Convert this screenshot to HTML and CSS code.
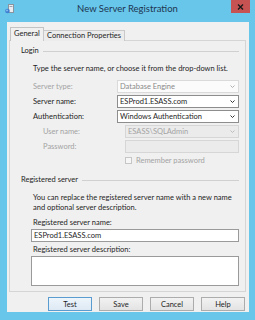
FILE: index.html
```html
<!DOCTYPE html>
<html lang="en">
<head>
    <meta charset="UTF-8">
    <title>New Server Registration</title>
    <link rel="stylesheet" href="styles.css">
</head>
<body>
    <div class="window">
        <div class="titlebar">
            <svg class="app-icon" width="9" height="10" viewBox="0 0 9 10">
                <rect x="3.5" y="0.5" width="5" height="8" fill="#e9edf1" stroke="#8a949e"/>
                <line x1="4.5" y1="2.5" x2="7.5" y2="2.5" stroke="#9aa4ae"/>
                <circle cx="2.5" cy="7" r="2.3" fill="#3d7fd0"/>
                <circle cx="2" cy="6.4" r="0.9" fill="#8fc3f2"/>
            </svg>
            <div class="title">New Server Registration</div>
            <div class="close">
                <svg width="7" height="6" viewBox="0 0 7 6">
                    <path d="M1 0.5 L6 5.5 M6 0.5 L1 5.5" stroke="#1a1a1a" stroke-width="1.4"/>
                </svg>
            </div>
        </div>

        <div class="client">
            <div class="tabs">
                <div class="tab active">General</div>
                <div class="tab">Connection Properties</div>
            </div>

            <div class="panel">
                <div class="legend"><span>Login</span></div>
                <p class="hint">Type the server name, or choose it from the drop-down list.</p>

                <div class="form">
                    <div class="label disabled">Server type:</div>
                    <div class="combo readonly">
                        <span>Database Engine</span>
                        <svg class="arrow" width="5" height="3" viewBox="0 0 5 3"><path d="M0.5 0.5 L2.5 2.5 L4.5 0.5" fill="none" stroke="#b0b0b0"/></svg>
                    </div>

                    <div class="label">Server name:</div>
                    <div class="combo">
                        <span>ESProd1.ESASS.com</span>
                        <svg class="arrow" width="5" height="3" viewBox="0 0 5 3"><path d="M0.5 0.5 L2.5 2.5 L4.5 0.5" fill="none" stroke="#333"/></svg>
                    </div>

                    <div class="label">Authentication:</div>
                    <div class="combo">
                        <span>Windows Authentication</span>
                        <svg class="arrow" width="5" height="3" viewBox="0 0 5 3"><path d="M0.5 0.5 L2.5 2.5 L4.5 0.5" fill="none" stroke="#333"/></svg>
                    </div>

                    <div class="label disabled sub">User name:</div>
                    <div class="combo off sub">
                        <span>ESASS\SQLAdmin</span>
                        <svg class="arrow" width="5" height="3" viewBox="0 0 5 3"><path d="M0.5 0.5 L2.5 2.5 L4.5 0.5" fill="none" stroke="#bdbdbd"/></svg>
                    </div>

                    <div class="label disabled sub">Password:</div>
                    <div class="combo off sub"></div>

                    <div></div>
                    <div class="check sub">
                        <span class="box"></span>
                        <span class="disabled">Remember password</span>
                    </div>
                </div>

                <div class="legend second"><span>Registered server</span></div>
                <p class="hint para">You can replace the registered server name with a new name<br>and optional server description.</p>

                <div class="reg">
                    <div class="reg-label">Registered server name:</div>
                    <div class="text-input">ESProd1.ESASS.com</div>
                    <div class="reg-label desc">Registered server description:</div>
                    <div class="text-area"></div>
                </div>
            </div>

            <div class="buttons">
                <button class="btn default">Test</button>
                <button class="btn">Save</button>
                <button class="btn">Cancel</button>
                <button class="btn">Help</button>
            </div>
        </div>
    </div>
</body>
</html>
```

FILE: styles.css
```css
:root {
    --frame: #68c6eb;
    --face: #f0f0f0;
    --line: #d5d5d5;
    --text: #1e1e1e;
    --text-off: #a3a3a3;
}

* {
    margin: 0;
    padding: 0;
    box-sizing: border-box;
}

body {
    font-family: Lato, 'Noto Sans', sans-serif;
    font-size: 7.5px;
    color: var(--text);
    background: var(--frame);
}

.window {
    width: 255px;
    height: 320px;
    background: var(--frame);
    display: flex;
    flex-direction: column;
}

/* title bar */
.titlebar {
    height: 22px;
    display: grid;
    grid-template-columns: 1fr auto 1fr;
    align-items: start;
}

.app-icon {
    margin: 4px 0 0 5px;
}

.title {
    font-size: 9.5px;
    line-height: 12px;
    margin-top: 3px;
    color: #1d3550;
}

.close {
    justify-self: end;
    width: 19px;
    height: 13px;
    margin-right: 5px;
    background: #c75252;
    display: flex;
    align-items: center;
    justify-content: center;
}

/* client area */
.client {
    height: 290px;
    margin: 0 6px 0 7px;
    background: var(--face);
    padding: 5px 0 0 0;
}

.tabs {
    display: flex;
    align-items: flex-end;
    margin-left: 3px;
    height: 14px;
    position: relative;
    z-index: 1;
}

.tab {
    height: 11px;
    line-height: 10px;
    padding: 0 3px;
    border: 1px solid #c9c9c9;
    border-bottom: none;
    background: #ececec;
    white-space: nowrap;
}

.tab.active {
    height: 14px;
    width: 34px;
    line-height: 12px;
    background: var(--face);
    border-color: #c3c3c3;
    margin-right: -1px;
}

.panel {
    margin: -1px 3px 0 2px;
    height: 252px;
    border: 1px solid var(--line);
    padding: 5px 6px 0 11px;
}

.legend {
    display: flex;
    align-items: center;
    height: 10px;
    line-height: 10px;
}

.legend::after {
    content: '';
    flex: 1;
    height: 1px;
    background: #d0d0d0;
    margin-left: 4px;
}

.legend.second {
    margin-top: 9px;
}

.hint {
    margin: 8px 0 0 12px;
    line-height: 10px;
    white-space: nowrap;
}

.hint.para {
    margin-top: 8px;
}

/* login form */
.form {
    display: grid;
    grid-template-columns: 84px 1fr;
    row-gap: 2px;
    margin: 6px 0 0 12px;
    align-items: center;
}

.label.sub {
    padding-left: 10px;
}

.disabled {
    color: var(--text-off);
}

.combo {
    height: 13px;
    border: 1px solid #8d8d8d;
    background: #fff;
    display: flex;
    align-items: center;
    justify-content: space-between;
    padding: 0 3px 0 2px;
    line-height: 11px;
}

.combo.readonly {
    border-color: #dadada;
    background: #fbfbfb;
    color: #8a8a8a;
}

.combo.off {
    border-color: #d6d6d6;
    background: #ebebeb;
    color: var(--text-off);
}

.combo.sub,
.check.sub {
    margin-left: 8px;
}

.check {
    display: flex;
    align-items: center;
    height: 11px;
}

.box {
    width: 7px;
    height: 7px;
    border: 1px solid #c6c6c6;
    background: #f6f6f6;
    margin-right: 4px;
}

/* registered server */
.reg {
    margin: 5px 0 0 10px;
}

.reg-label {
    padding-left: 2px;
    line-height: 10px;
}

.reg-label.desc {
    margin-top: 3px;
}

.text-input {
    margin-top: 1px;
    height: 13px;
    border: 1px solid #9a9a9a;
    background: #fff;
    padding-left: 2px;
    line-height: 11px;
}

.text-area {
    margin-top: 1px;
    height: 30px;
    border: 1px solid #9a9a9a;
    background: #fff;
}

/* buttons */
.buttons {
    display: flex;
    justify-content: flex-end;
    gap: 7px;
    margin-top: 5px;
    padding-right: 4px;
}

.btn {
    width: 44px;
    height: 14px;
    font-family: inherit;
    font-size: 7.5px;
    color: var(--text);
    border: 1px solid #acacac;
    background: linear-gradient(#f2f2f2, #e3e3e3);
}

.btn.default {
    border-color: #5a9bd0;
    background: linear-gradient(#eef5fb, #dde9f4);
}
```
